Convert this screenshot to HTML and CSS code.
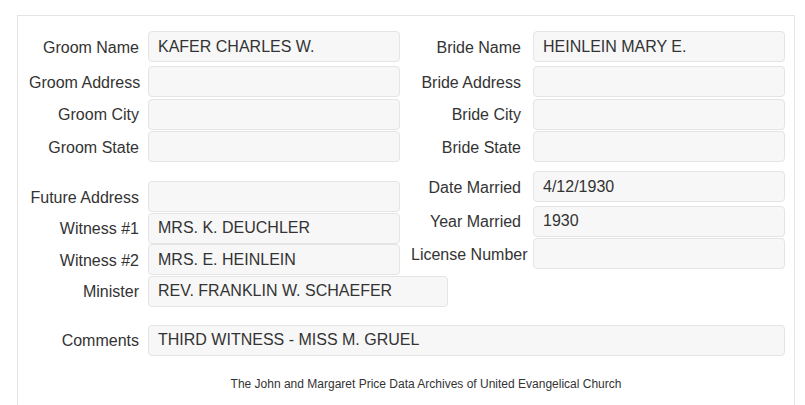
FILE: index.html
```html
<!DOCTYPE html>
<html lang="en">
  <head>
    <meta charset="UTF-8" />
    <meta name="viewport" content="width=device-width, initial-scale=1.0" />
    <title>Marriage Record</title>
    <link rel="stylesheet" href="styles.css">
  </head>
  <body>
    <div class="record">
      <div class="columns">
        <div class="col col-left">
          <div class="group top">
            <div class="field">
              <label class="label">Groom Name</label>
              <input class="value" type="text" value="KAFER CHARLES W." readonly />
            </div>
            <div class="field">
              <label class="label">Groom Address</label>
              <input class="value" type="text" value="" readonly />
            </div>
            <div class="field">
              <label class="label">Groom City</label>
              <input class="value" type="text" value="" readonly />
            </div>
            <div class="field">
              <label class="label">Groom State</label>
              <input class="value" type="text" value="" readonly />
            </div>
          </div>

          <div class="group lower">
            <div class="field">
              <label class="label">Future Address</label>
              <input class="value" type="text" value="" readonly />
            </div>
            <div class="field">
              <label class="label">Witness #1</label>
              <input class="value" type="text" value="MRS. K. DEUCHLER" readonly />
            </div>
            <div class="field">
              <label class="label">Witness #2</label>
              <input class="value" type="text" value="MRS. E. HEINLEIN" readonly />
            </div>
            <div class="field">
              <label class="label">Minister</label>
              <input class="value wide" type="text" value="REV. FRANKLIN W. SCHAEFER" readonly />
            </div>
          </div>
        </div>

        <div class="col col-right">
          <div class="group top">
            <div class="field">
              <label class="label">Bride Name</label>
              <input class="value" type="text" value="HEINLEIN MARY E." readonly />
            </div>
            <div class="field">
              <label class="label">Bride Address</label>
              <input class="value" type="text" value="" readonly />
            </div>
            <div class="field">
              <label class="label">Bride City</label>
              <input class="value" type="text" value="" readonly />
            </div>
            <div class="field">
              <label class="label">Bride State</label>
              <input class="value" type="text" value="" readonly />
            </div>
          </div>

          <div class="group lower">
            <div class="field">
              <label class="label">Date Married</label>
              <input class="value" type="text" value="4/12/1930" readonly />
            </div>
            <div class="field">
              <label class="label">Year Married</label>
              <input class="value" type="text" value="1930" readonly />
            </div>
            <div class="field">
              <label class="label">License Number</label>
              <input class="value" type="text" value="" readonly />
            </div>
          </div>
        </div>
      </div>

      <div class="field comments">
        <label class="label">Comments</label>
        <input class="value" type="text" value="THIRD WITNESS - MISS M. GRUEL" readonly />
      </div>

      <div class="footer">The John and Margaret Price Data Archives of United Evangelical Church</div>
    </div>
  </body>
</html>
```

FILE: styles.css
```css
body {
  margin: 0;
  padding: 0;
  background: white;
  font-family: "Liberation Sans", Arial, sans-serif;
  color: rgb(51, 51, 51);
}
.record {
  width: 778px;
  min-height: 390px;
  box-sizing: border-box;
  margin: 15px 0 0 17px;
  padding: 15px 0 0 11px;
  border: 1px solid rgb(228, 228, 228);
  border-bottom: none;
}
.columns {
  display: flex;
  gap: 11px;
  align-items: flex-start;
}
.col {
  flex: none;
}
.col-left {
  width: 371px;
}
.col-right {
  width: 374px;
}
.field {
  display: flex;
  align-items: center;
  height: 31px;
  margin-bottom: 1.5px;
}
.label {
  width: 110px;
  flex: none;
  text-align: right;
  white-space: nowrap;
  font-size: 16px;
  padding-top: 2px;
}
.col-left .label,
.comments .label {
  margin-right: 9px;
}
.col-right .label {
  margin-right: 12px;
}
.value {
  width: 252px;
  height: 31px;
  flex: none;
  box-sizing: border-box;
  background: rgb(247, 247, 247);
  border: 1px solid rgb(228, 228, 228);
  border-radius: 4px;
  padding: 0 9px;
  outline: none;
  font-family: "Liberation Sans", Arial, sans-serif;
  font-size: 16px;
  color: rgb(51, 51, 51);
}
.value.wide {
  width: 300px;
}
.group.top .field:first-child {
  margin-bottom: 4px;
}
.col-left .lower {
  margin-top: 19px;
}
.col-left .lower .field {
  margin-bottom: 0.5px;
}
.col-right .lower {
  margin-top: 9px;
}
.col-right .lower .field:first-child {
  margin-bottom: 3.5px;
}
.comments {
  margin-top: 17.5px;
}
.comments .value {
  width: 637px;
}
.footer {
  margin-top: 20px;
  padding-left: 29px;
  text-align: center;
  font-size: 12px;
  line-height: 17px;
}
```
